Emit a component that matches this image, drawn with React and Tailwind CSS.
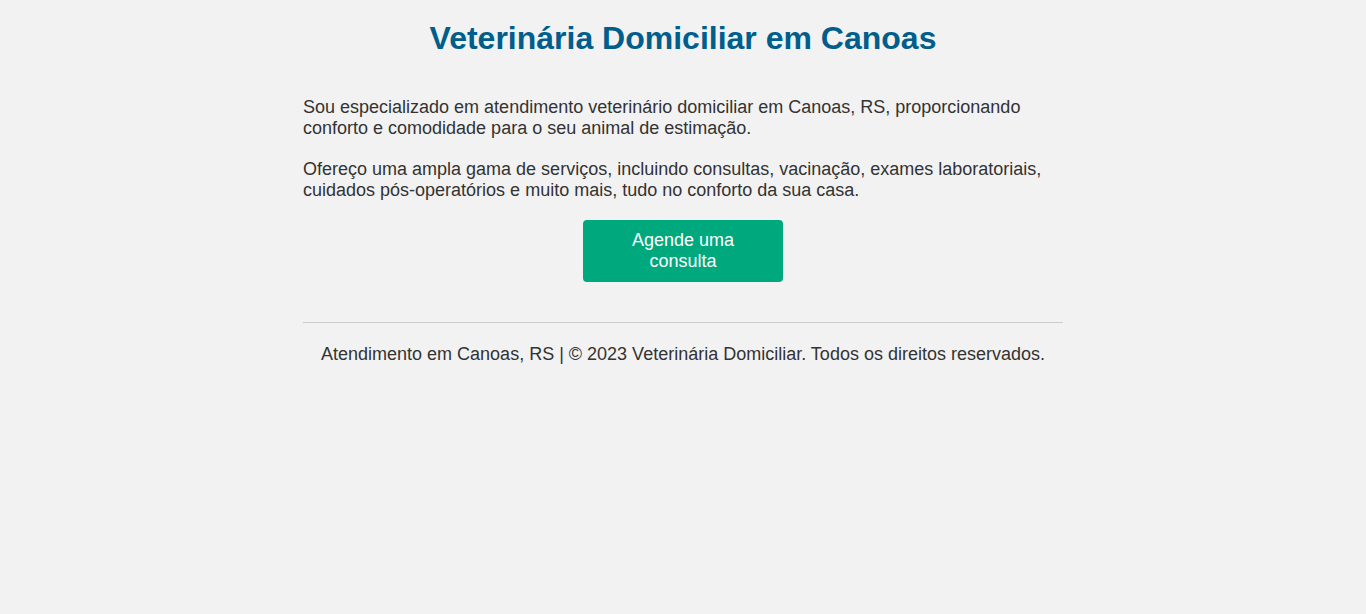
export default function App() {
  return (
    <div className="min-h-[614px] bg-[#f2f2f2] text-[#333333]" style={{ fontFamily: '"Liberation Sans", Arial, sans-serif' }}>
      <header className="pt-[20px] text-center">
        <h1 className="text-[32px] font-bold leading-[37px] text-[#005e8c]">Veterinária Domiciliar em Canoas</h1>
      </header>
      <main className="mx-auto w-[760px] pt-[40px]">
        <p className="text-[18px] leading-[21px]">
          Sou especializado em atendimento veterinário domiciliar em Canoas, RS, proporcionando conforto e comodidade para o seu animal de estimação.
        </p>
        <p className="mt-[20px] text-[18px] leading-[21px]">
          Ofereço uma ampla gama de serviços, incluindo consultas, vacinação, exames laboratoriais, cuidados pós-operatórios e muito mais, tudo no conforto da sua casa.
        </p>
        <div className="mt-[19px] flex justify-center">
          <a href="#" className="block w-[200px] rounded-[4px] bg-[#00a87d] px-[20px] py-[10px] text-center text-[18px] leading-[21px] text-white">
            Agende uma consulta
          </a>
        </div>
        <div className="mt-[40px] h-px bg-[#cccccc]" />
        <footer className="pt-[21px] text-center text-[18px] leading-[21px]">
          Atendimento em Canoas, RS | © 2023 Veterinária Domiciliar. Todos os direitos reservados.
        </footer>
      </main>
    </div>
  );
}
